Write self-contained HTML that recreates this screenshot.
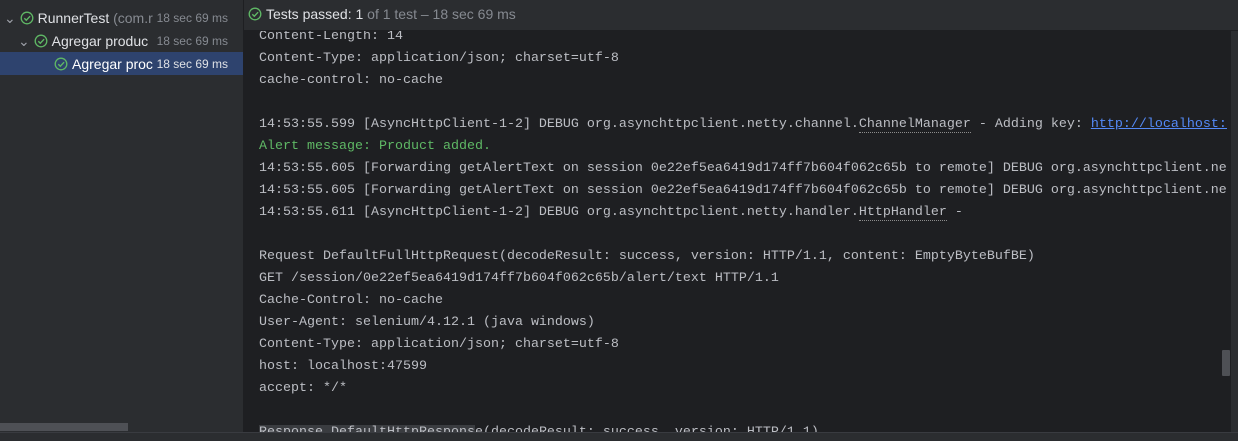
<!DOCTYPE html>
<html><head><style>
body{margin:0;width:1238px;height:440px;overflow:hidden;background:#1e1f22;font-family:"Liberation Sans",sans-serif;position:relative}
#left{position:absolute;left:0;top:0;width:243px;height:432px;background:#2b2d30;border-right:1px solid #1e1f22}
.row{position:absolute;height:22px;line-height:22px;font-size:14px;color:#dfe1e5;white-space:nowrap}
.t{color:#868a91;font-size:12px;position:absolute;right:0;top:0;background:#2b2d30;padding-left:3px}
.chk{display:inline-block;vertical-align:middle;margin-right:4px;margin-top:-2px}
#hdr{position:absolute;left:244px;top:0;right:0;height:30px;background:#2b2d30;border-bottom:1px solid #1e1f22;font-size:14px;line-height:28px;color:#dfe1e5}
#con{position:absolute;left:259px;top:26px;width:968px;height:406px;overflow:hidden;font-family:"Liberation Mono",monospace;font-size:13.33px;color:#bcbec4;white-space:pre;line-height:22px}
.g{color:#5fb865}.u{border-bottom:1px dotted #8c8c8c}.l{color:#548af7;text-decoration:underline}
#bot{position:absolute;left:0;top:432px;width:1238px;height:8px;background:#2b2d30;border-top:1px solid #393b40}
</style></head><body>
<div id="left">
<div class="row" style="left:4px;top:7px;width:224px"><span style="color:#9da0a8">⌄</span>&nbsp;<svg class="chk" width="14" height="14" viewBox="0 0 14 14"><circle cx="7" cy="7" r="5.8" fill="none" stroke="#5fb865" stroke-width="1.3"/><path d="M4.3 7.2l2 2 3.8-4" fill="none" stroke="#5fb865" stroke-width="1.4"/></svg>RunnerTest <span style="color:#868a91">(com.r</span><span class="t">18 sec 69 ms</span></div>
<div class="row" style="left:18px;top:30px;width:210px"><span style="color:#9da0a8">⌄</span>&nbsp;<svg class="chk" width="14" height="14" viewBox="0 0 14 14"><circle cx="7" cy="7" r="5.8" fill="none" stroke="#5fb865" stroke-width="1.3"/><path d="M4.3 7.2l2 2 3.8-4" fill="none" stroke="#5fb865" stroke-width="1.4"/></svg>Agregar produc<span class="t">18 sec 69 ms</span></div>
<div style="position:absolute;left:0;top:52px;width:243px;height:23px;background:#2e436e"></div>
<div class="row" style="left:54px;top:53px;width:174px;color:#fff"><svg class="chk" width="14" height="14" viewBox="0 0 14 14"><circle cx="7" cy="7" r="5.8" fill="none" stroke="#5fb865" stroke-width="1.3"/><path d="M4.3 7.2l2 2 3.8-4" fill="none" stroke="#5fb865" stroke-width="1.4"/></svg>Agregar proc<span class="t" style="color:#dfe1e5;background:#2e436e">18 sec 69 ms</span></div>
<div style="position:absolute;left:0;top:423px;width:128px;height:8px;background:#4e5055"></div>
</div>
<div id="con">Content-Length: 14
Content-Type: application/json; charset=utf-8
cache-control: no-cache

14:53:55.599 [AsyncHttpClient-1-2] DEBUG org.asynchttpclient.netty.channel.<span class="u">ChannelManager</span> - Adding key: <span class="l">http://localhost:47599</span>
<span class="g">Alert message: Product added.</span>
14:53:55.605 [Forwarding getAlertText on session 0e22ef5ea6419d174ff7b604f062c65b to remote] DEBUG org.asynchttpclient.netty
14:53:55.605 [Forwarding getAlertText on session 0e22ef5ea6419d174ff7b604f062c65b to remote] DEBUG org.asynchttpclient.netty
14:53:55.611 [AsyncHttpClient-1-2] DEBUG org.asynchttpclient.netty.handler.<span class="u">HttpHandler</span> -

Request DefaultFullHttpRequest(decodeResult: success, version: HTTP/1.1, content: EmptyByteBufBE)
GET /session/0e22ef5ea6419d174ff7b604f062c65b/alert/text HTTP/1.1
Cache-Control: no-cache
User-Agent: selenium/4.12.1 (java windows)
Content-Type: application/json; charset=utf-8
host: localhost:47599
accept: */*

<span style="background:#3a3c40">Response DefaultHttpRespons</span>e(decodeResult: success, version: HTTP/1.1)</div>
<div id="hdr"><span style="position:absolute;left:4px;top:0"><svg class="chk" width="14" height="14" viewBox="0 0 14 14"><circle cx="7" cy="7" r="5.8" fill="none" stroke="#5fb865" stroke-width="1.3"/><path d="M4.3 7.2l2 2 3.8-4" fill="none" stroke="#5fb865" stroke-width="1.4"/></svg>Tests passed: 1 <span style="color:#868a91">of 1 test – 18 sec 69 ms</span></span></div>
<div style="position:absolute;left:1231px;top:31px;width:7px;height:401px;background:#2b2d30"></div>
<div style="position:absolute;left:1222px;top:350px;width:8px;height:26px;background:#4e5055;border-radius:1px"></div>
<div id="bot"></div>
</body></html>
